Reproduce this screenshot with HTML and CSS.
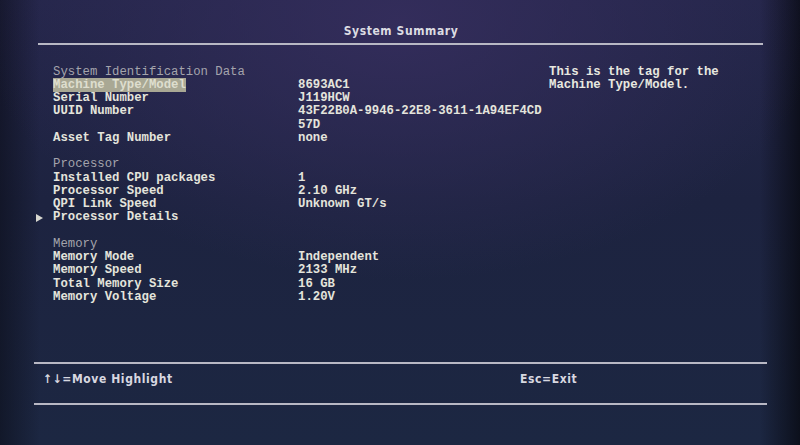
FILE: index.html
```html
<!DOCTYPE html>
<html>
<head>
<meta charset="utf-8">
<title>System Summary</title>
<link rel="stylesheet" href="styles.css">
</head>
<body>
<div class="screen">
  <div class="title">System Summary</div>
  <div class="rule rule-top"></div>
  <div class="content">
    <div class="list">
      <div class="row"><span class="mark"></span><span class="head">System Identification Data</span><span></span></div>
      <div class="row"><span class="mark"></span><span class="label"><span class="hl">Machine Type/Model</span></span><span class="val">8693AC1</span></div>
      <div class="row"><span class="mark"></span><span class="label">Serial Number</span><span class="val">J119HCW</span></div>
      <div class="row"><span class="mark"></span><span class="label">UUID Number</span><span class="val">43F22B0A-9946-22E8-3611-1A94EF4CD</span></div>
      <div class="row"><span class="mark"></span><span class="label"></span><span class="val">57D</span></div>
      <div class="row"><span class="mark"></span><span class="label">Asset Tag Number</span><span class="val">none</span></div>
      <div class="row"></div>
      <div class="row"><span class="mark"></span><span class="head">Processor</span><span></span></div>
      <div class="row"><span class="mark"></span><span class="label">Installed CPU packages</span><span class="val">1</span></div>
      <div class="row"><span class="mark"></span><span class="label">Processor Speed</span><span class="val">2.10 GHz</span></div>
      <div class="row"><span class="mark"></span><span class="label">QPI Link Speed</span><span class="val">Unknown GT/s</span></div>
      <div class="row"><span class="mark"><svg class="tri" width="7" height="8" viewBox="0 0 7 8"><path d="M0 0 L7 4 L0 8 Z" fill="#d8d8d0"/></svg></span><span class="label">Processor Details</span><span></span></div>
      <div class="row"></div>
      <div class="row"><span class="mark"></span><span class="head">Memory</span><span></span></div>
      <div class="row"><span class="mark"></span><span class="label">Memory Mode</span><span class="val">Independent</span></div>
      <div class="row"><span class="mark"></span><span class="label">Memory Speed</span><span class="val">2133 MHz</span></div>
      <div class="row"><span class="mark"></span><span class="label">Total Memory Size</span><span class="val">16 GB</span></div>
      <div class="row"><span class="mark"></span><span class="label">Memory Voltage</span><span class="val">1.20V</span></div>
    </div>
    <div class="help">
      <div>This is the tag for the</div>
      <div>Machine Type/Model.</div>
    </div>
  </div>
  <div class="footer">
    <span class="key key-move">↑↓=Move Highlight</span>
    <span class="key">Esc=Exit</span>
  </div>
</div>
</body>
</html>
```

FILE: styles.css
```css
html, body {
  margin: 0;
  padding: 0;
}
body {
  width: 800px;
  height: 445px;
  overflow: hidden;
  background:
    radial-gradient(ellipse 420px 260px at 400px 20px, rgba(54, 46, 94, 0.85), rgba(40, 40, 80, 0) 100%),
    linear-gradient(90deg, rgba(10, 12, 22, 0.55) 0px, rgba(10, 12, 22, 0) 40px, rgba(10, 12, 22, 0) 760px, rgba(8, 10, 18, 0.8) 800px),
    linear-gradient(180deg, #24264a 0px, #1d2340 200px, #1c2742 445px);
}
.screen {
  height: 445px;
  box-sizing: border-box;
  padding-top: 24px;
  padding-bottom: 40px;
  display: flex;
  flex-direction: column;
  font-family: "Liberation Mono", "DejaVu Sans Mono", monospace;
  font-weight: bold;
  font-size: 12.3px;
  color: #e4e4dc;
}
.title {
  height: 14px;
  line-height: 14px;
  text-align: center;
  font-family: "DejaVu Sans Condensed", "DejaVu Sans", sans-serif;
  font-size: 12px;
  letter-spacing: 0.6px;
  color: #dcdce2;
  padding-left: 2px;
}
.rule {
  height: 2px;
  background: #b8b8c4;
}
.rule-top {
  margin: 5px 37px 0 38px;
}
.content {
  flex: 1;
  display: flex;
  padding-top: 20.5px;
}
.list {
  width: 549px;
  padding-left: 36px;
  box-sizing: border-box;
}
.row {
  display: grid;
  grid-template-columns: 17px 245px auto;
  height: 13.25px;
  line-height: 13.25px;
  white-space: nowrap;
}
.mark {
  display: flex;
  align-items: center;
}
.tri {
  display: block;
  margin-top: 1px;
}
.head {
  color: #a4a4ac;
  font-weight: normal;
}
.hl {
  background: #a9a894;
  color: #dedece;
  padding: 0;
}
.help {
  line-height: 13.25px;
  white-space: nowrap;
  color: #e8e8e0;
}
.footer {
  margin: 0 33px 0 34px;
  border-top: 2px solid #b8b8c4;
  border-bottom: 2px solid #b8b8c4;
  display: flex;
  padding-top: 8px;
  padding-left: 9px;
  box-sizing: content-box;
  height: 31px;
  font-family: "DejaVu Sans Condensed", "DejaVu Sans", sans-serif;
  font-size: 12px;
  letter-spacing: 0.6px;
  color: #d8d8e0;
  line-height: 14px;
}
.key-move {
  width: 477px;
}
```
